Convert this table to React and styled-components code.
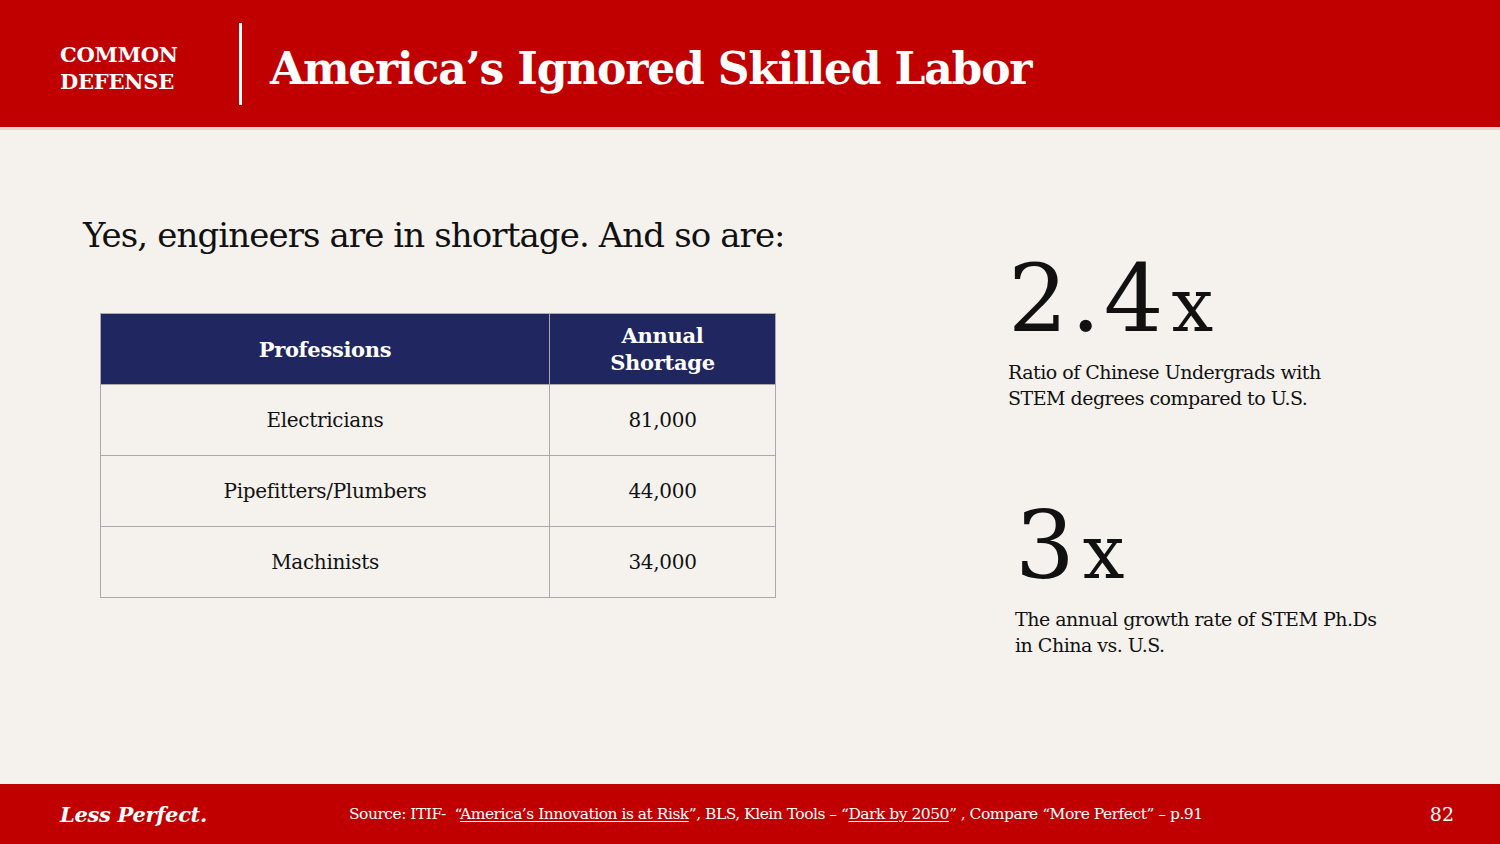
import styled, { createGlobalStyle } from 'styled-components';

const GlobalStyle = createGlobalStyle`
  html, body {
    margin: 0;
    padding: 0;
    background: #f5f2ee;
  }
  body {
    font-family: "DejaVu Serif", "Liberation Serif", serif;
    color: #111;
  }
`;

const Slide = styled.div`
  width: 1500px;
  height: 844px;
  display: flex;
  flex-direction: column;
  background: #f5f2ee;
  overflow: hidden;
`;

const Header = styled.header`
  height: 127px;
  background: #c00000;
  display: flex;
  align-items: center;
  padding-left: 60px;
  border-bottom: 3px solid #e9d6d2;
  box-sizing: content-box;
`;

const Brand = styled.div`
  color: #fff;
  font-weight: 700;
  font-size: 21px;
  line-height: 27px;
  letter-spacing: -0.2px;
  width: 179px;
  margin-top: 8px;
`;

const Divider = styled.div`
  width: 3px;
  height: 82px;
  background: #fff;
  margin-right: 28px;
`;

const Title = styled.h1`
  margin: 10px 0 0;
  color: #fff;
  font-size: 44px;
  font-weight: 700;
  letter-spacing: -1.2px;
`;

const Main = styled.main`
  flex: 1;
  display: grid;
  grid-template-columns: 925px 1fr;
  padding-left: 83px;
`;

const LeftCol = styled.section`
  padding-top: 83px;
`;

const Lead = styled.h2`
  margin: 0;
  font-weight: 400;
  font-size: 34px;
  line-height: 44px;
  letter-spacing: -0.9px;
  white-space: nowrap;
`;

const Table = styled.table`
  margin: 56px 0 0 17px;
  border-collapse: collapse;
  width: 676px;
`;

const HeadCell = styled.th`
  background: #1f2660;
  color: #fff;
  font-weight: 700;
  font-size: 21px;
  line-height: 27px;
  height: 70px;
  padding: 0;
  border: 1px solid #a9a9a9;
  width: ${p => p.width}px;
  letter-spacing: -0.3px;
`;

const Cell = styled.td`
  text-align: center;
  font-size: 20px;
  height: 70px;
  padding: 0;
  border: 1px solid #a9a9a9;
  letter-spacing: -0.3px;
`;

const RightCol = styled.section`
  padding-top: 115px;
  display: flex;
  flex-direction: column;
`;

const Stat = styled.div`
  margin-left: ${p => p.offset || 0}px;
  margin-bottom: ${p => p.gap || 0}px;
`;

const BigNumber = styled.div`
  font-size: 94px;
  line-height: 108px;
  letter-spacing: 3px;
  white-space: nowrap;
`;

const Times = styled.span`
  font-size: 74px;
  letter-spacing: 0;
  margin-left: 5px;
`;

const Caption = styled.p`
  margin: 0;
  font-size: 19px;
  line-height: 26px;
  letter-spacing: -0.5px;
`;

const Footer = styled.footer`
  height: 60px;
  background: #c00000;
  color: #fff;
  display: flex;
  align-items: center;
  padding: 0 46px 0 60px;
`;

const Tagline = styled.div`
  font-weight: 700;
  font-style: italic;
  font-size: 21px;
  width: 289px;
  letter-spacing: -0.3px;
`;

const Source = styled.div`
  flex: 1;
  font-size: 15.5px;
  letter-spacing: -0.5px;
`;

const Ref = styled.span`
  text-decoration: underline;
  text-underline-offset: 2px;
`;

const PageNo = styled.div`
  font-size: 19px;
`;

const rows = [
  ['Electricians', '81,000'],
  ['Pipefitters/Plumbers', '44,000'],
  ['Machinists', '34,000'],
];

export default function App() {
  return (
    <Slide>
      <GlobalStyle />
      <Header>
        <Brand>
          COMMON
          <br />
          DEFENSE
        </Brand>
        <Divider />
        <Title>America’s Ignored Skilled Labor</Title>
      </Header>
      <Main>
        <LeftCol>
          <Lead>Yes, engineers are in shortage. And so are:</Lead>
          <Table>
            <thead>
              <tr>
                <HeadCell width={450}>Professions</HeadCell>
                <HeadCell width={226}>
                  Annual
                  <br />
                  Shortage
                </HeadCell>
              </tr>
            </thead>
            <tbody>
              {rows.map(([job, n]) => (
                <tr key={job}>
                  <Cell>{job}</Cell>
                  <Cell>{n}</Cell>
                </tr>
              ))}
            </tbody>
          </Table>
        </LeftCol>
        <RightCol>
          <Stat gap={81}>
            <BigNumber>
              2.4<Times>x</Times>
            </BigNumber>
            <Caption>
              Ratio of Chinese Undergrads with
              <br />
              STEM degrees compared to U.S.
            </Caption>
          </Stat>
          <Stat offset={7}>
            <BigNumber>
              3<Times>x</Times>
            </BigNumber>
            <Caption>
              The annual growth rate of STEM Ph.Ds
              <br />
              in China vs. U.S.
            </Caption>
          </Stat>
        </RightCol>
      </Main>
      <Footer>
        <Tagline>Less Perfect.</Tagline>
        <Source>
          Source: ITIF-&nbsp; “<Ref>America’s Innovation is at Risk</Ref>”, BLS, Klein Tools – “
          <Ref>Dark by 2050</Ref>” , Compare “More Perfect” – p.91
        </Source>
        <PageNo>82</PageNo>
      </Footer>
    </Slide>
  );
}
